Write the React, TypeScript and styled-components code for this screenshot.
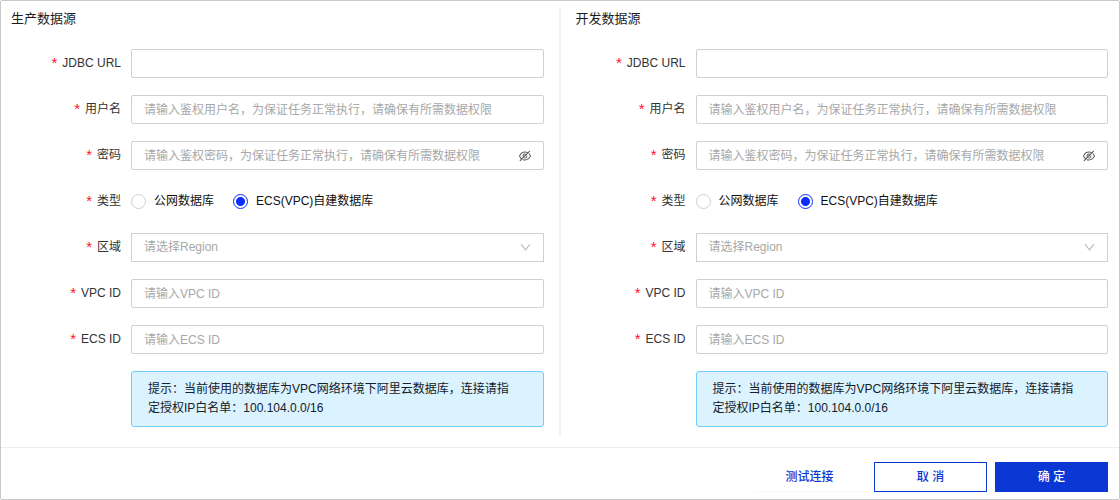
import React, { useState } from "react";
import styled, { createGlobalStyle } from "styled-components";
import { AiOutlineDown, AiOutlineEyeInvisible } from "react-icons/ai";

const GlobalStyle = createGlobalStyle`
  *, *::before, *::after {
    box-sizing: border-box;
  }
  body {
    margin: 0;
    background: #fff;
    color: #1c1c1c;
    font-family: "Liberation Sans", "Noto Sans CJK SC", sans-serif;
    font-size: 12px;
    line-height: 19px;
  }
  input, select, button {
    font: inherit;
  }
`;

const Dialog = styled.form`
  border: 1px solid #c9c9c9;
  border-radius: 2px;
  background: #fff;
`;

const Body = styled.div`
  display: flex;
  padding: 8px 11px 10px 10px;
`;

const Divider = styled.div`
  flex: none;
  width: 2px;
  margin: 0 15px;
  background: #f2f2f2;
`;

const Source = styled.section`
  flex: 1;
  min-width: 0;
  padding-bottom: 10px;
`;

const Title = styled.h2`
  margin: 0 0 21px;
  font-size: 13px;
  font-weight: 400;
  line-height: 19px;
`;

const Rows = styled.div`
  display: flex;
  flex-direction: column;
  gap: 17px;
`;

const Row = styled.div`
  display: flex;
  align-items: center;
  min-height: 29px;
`;

const labelCell = `
  flex: none;
  width: 120px;
  padding-right: 10px;
  text-align: right;
  color: #333;
`;

const Label = styled.label`
  ${labelCell}
`;

const GroupLabel = styled.span`
  ${labelCell}
`;

const Star = styled.span`
  margin-right: 5px;
  color: #ff0f32;
  font-size: 15px;
  line-height: 12px;
  vertical-align: -1px;
`;

const Control = styled.div`
  position: relative;
  flex: 1;
  min-width: 0;
`;

const Input = styled.input<{ $withIcon?: boolean }>`
  display: block;
  width: 100%;
  height: 29px;
  padding: 0 ${(p) => (p.$withIcon ? 32 : 12)}px 0 12px;
  border: 1px solid #d0d0d0;
  border-radius: 2px;
  background: #fff;
  color: #1c1c1c;
  outline: none;

  &::placeholder {
    color: #a8a8a8;
    opacity: 1;
  }
  &:focus {
    border-color: #0b38d4;
  }
`;

const Select = styled.select`
  display: block;
  width: 100%;
  height: 29px;
  padding: 0 32px 0 12px;
  border: 1px solid #d0d0d0;
  border-radius: 0;
  background: #fff;
  color: #a8a8a8;
  appearance: none;
  outline: none;
`;

const EyeButton = styled.button`
  position: absolute;
  top: 0;
  right: 12px;
  display: flex;
  align-items: center;
  height: 29px;
  padding: 0;
  border: 0;
  background: none;
  color: #555;
  font-size: 14px;
  cursor: pointer;
`;

const Chevron = styled(AiOutlineDown)`
  position: absolute;
  top: 8px;
  right: 12px;
  color: #b5b5b5;
  font-size: 13px;
  pointer-events: none;
`;

const Options = styled.div`
  display: flex;
  flex: 1;
  gap: 19px;
`;

const Option = styled.label`
  display: flex;
  align-items: center;
  gap: 8px;
  color: #111;
`;

const Radio = styled.input`
  width: 15px;
  height: 15px;
  margin: 0;
  border: 1px solid #d0d0d0;
  border-radius: 50%;
  background: #fff;
  appearance: none;

  &:checked {
    border-color: #0a2cff;
    background: radial-gradient(circle, #0a2cff 4px, #fff 5px);
  }
`;

const Tip = styled.p`
  margin: 0 0 0 120px;
  padding: 8px 32px 8px 16px;
  border: 1px solid #70cdfb;
  border-radius: 3px;
  background: #dbf3ff;
  color: #14202a;
`;

const Footer = styled.footer`
  display: flex;
  justify-content: flex-end;
  gap: 8px;
  padding: 14px 11px 7px;
  border-top: 1px solid #ebebeb;
`;

const Button = styled.button<{ $kind: "primary" | "outline" | "text" }>`
  width: 113px;
  height: 30px;
  padding: 0;
  border: 1px solid ${(p) => (p.$kind === "text" ? "#fff" : "#0b38d4")};
  border-bottom-color: ${(p) => (p.$kind === "text" ? "#f8f8f8" : "#0b38d4")};
  background: ${(p) => (p.$kind === "primary" ? "#0b38d4" : "#fff")};
  color: ${(p) => (p.$kind === "primary" ? "#fff" : "#0b38d4")};
  font-size: 12px;
  font-weight: 500;
  cursor: pointer;
`;

function Required() {
  return <Star aria-hidden="true">*</Star>;
}

type TextFieldProps = { id: string; label: string; placeholder?: string };

function TextField({ id, label, placeholder }: TextFieldProps) {
  return (
    <Row>
      <Label htmlFor={id}>
        <Required />
        {label}
      </Label>
      <Control>
        <Input id={id} placeholder={placeholder} />
      </Control>
    </Row>
  );
}

function PasswordField({ id }: { id: string }) {
  const [visible, setVisible] = useState(false);
  return (
    <Row>
      <Label htmlFor={id}>
        <Required />
        密码
      </Label>
      <Control>
        <Input
          id={id}
          $withIcon
          type={visible ? "text" : "password"}
          autoComplete="off"
          placeholder="请输入鉴权密码，为保证任务正常执行，请确保有所需数据权限"
        />
        <EyeButton type="button" aria-label="显示密码" onClick={() => setVisible(!visible)}>
          <AiOutlineEyeInvisible />
        </EyeButton>
      </Control>
    </Row>
  );
}

function DataSource({ id, title }: { id: string; title: string }) {
  return (
    <Source>
      <Title>{title}</Title>
      <Rows>
        <TextField id={`${id}-url`} label="JDBC URL" />
        <TextField
          id={`${id}-user`}
          label="用户名"
          placeholder="请输入鉴权用户名，为保证任务正常执行，请确保有所需数据权限"
        />
        <PasswordField id={`${id}-password`} />
        <Row role="radiogroup" aria-labelledby={`${id}-type`}>
          <GroupLabel id={`${id}-type`}>
            <Required />
            类型
          </GroupLabel>
          <Options>
            <Option>
              <Radio type="radio" name={`${id}-type`} value="public" />
              公网数据库
            </Option>
            <Option>
              <Radio type="radio" name={`${id}-type`} value="ecs" defaultChecked />
              ECS(VPC)自建数据库
            </Option>
          </Options>
        </Row>
        <Row>
          <Label htmlFor={`${id}-region`}>
            <Required />
            区域
          </Label>
          <Control>
            <Select id={`${id}-region`} defaultValue="">
              <option value="">请选择Region</option>
            </Select>
            <Chevron />
          </Control>
        </Row>
        <TextField id={`${id}-vpc`} label="VPC ID" placeholder="请输入VPC ID" />
        <TextField id={`${id}-ecs`} label="ECS ID" placeholder="请输入ECS ID" />
        <Tip>
          提示：当前使用的数据库为VPC网络环境下阿里云数据库，连接请指定授权IP白名单：100.104.0.0/16
        </Tip>
      </Rows>
    </Source>
  );
}

export default function App() {
  return (
    <>
      <GlobalStyle />
      <Dialog onSubmit={(e) => e.preventDefault()}>
        <Body>
          <DataSource id="prod" title="生产数据源" />
          <Divider />
          <DataSource id="dev" title="开发数据源" />
        </Body>
        <Footer>
          <Button type="button" $kind="text">测试连接</Button>
          <Button type="button" $kind="outline">取 消</Button>
          <Button type="submit" $kind="primary">确 定</Button>
        </Footer>
      </Dialog>
    </>
  );
}
